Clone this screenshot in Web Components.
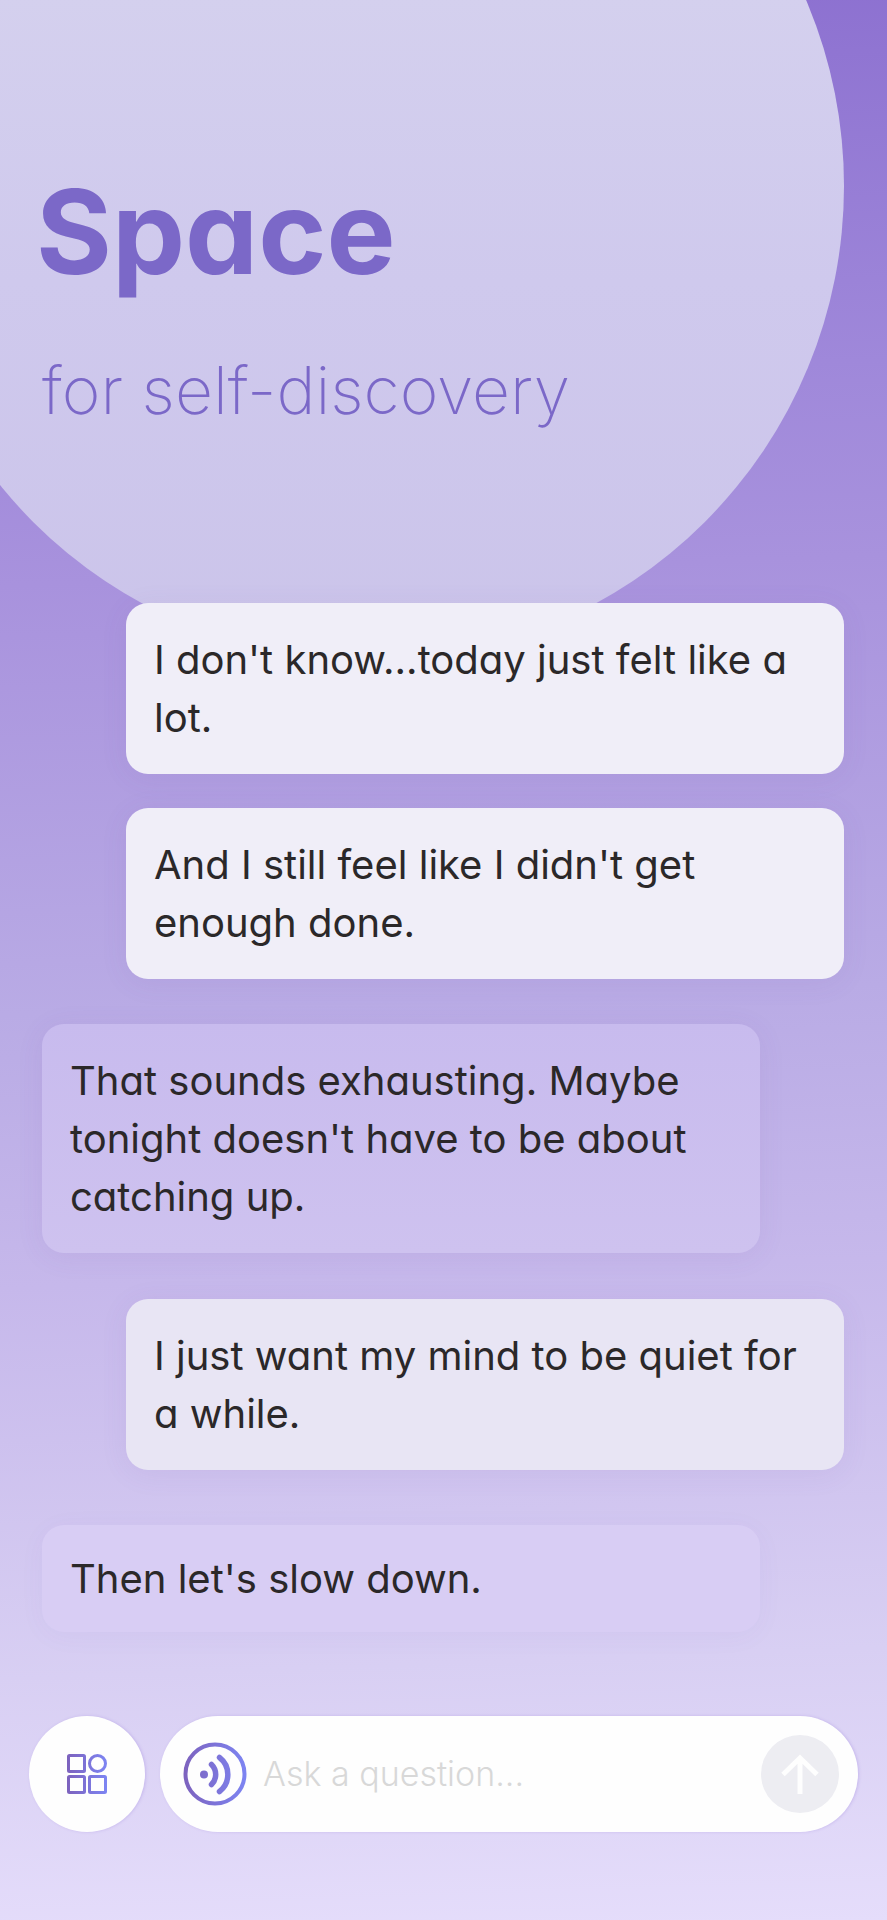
<!DOCTYPE html>
<html lang="en">
<head>
<meta charset="UTF-8">
<meta name="viewport" content="width=device-width, initial-scale=1">
<title>Space for self-discovery</title>
<style>
    body {
        margin: 0;
        font-family: Inter, "Liberation Sans", sans-serif;
        background: #8f76d3;
    }
</style>
</head>
<body>
<space-app>
    <space-hero slot="hero">
        <span slot="title">Space</span>
        <span slot="subtitle">for self-discovery</span>
    </space-hero>

    <chat-bubble from="me">I don't know...today just felt like a lot.</chat-bubble>
    <chat-bubble from="me">And I still feel like I didn't get enough done.</chat-bubble>
    <chat-bubble from="space">That sounds exhausting. Maybe tonight doesn't have to be about catching up.</chat-bubble>
    <chat-bubble from="me" tone="soft">I just want my mind to be quiet for a while.</chat-bubble>
    <chat-bubble from="space" tone="soft">Then let's slow down.</chat-bubble>

    <ask-bar slot="footer" placeholder="Ask a question..."></ask-bar>
</space-app>

<script>
class SpaceApp extends HTMLElement {
    constructor() {
        super();
        this.attachShadow({mode: "open"});

        this.shadowRoot.innerHTML = `
            <slot name="hero"></slot>
            <main class="chat"><slot></slot></main>
            <slot name="footer"></slot>

            <style>
                :host {
                    display: flex;
                    flex-direction: column;
                    min-height: 100vh;
                    overflow: hidden;
                    background: linear-gradient(178deg, #8c70d0 0%, #9f88da 20%, #a892dd 30%, #b9abe5 52%, #c6b8eb 66%, #d8cff3 86%, #e5ddfb 100%);
                }

                .chat {
                    flex: 1;
                    display: flex;
                    flex-direction: column;
                    padding: 0 43px 0 42px;
                    position: relative;
                }
            </style>
        `;
    }
}
customElements.define('space-app', SpaceApp);

class SpaceHero extends HTMLElement {
    constructor() {
        super();
        this.attachShadow({mode: "open"});

        this.shadowRoot.innerHTML = `
            <div class="moon"></div>
            <h1><slot name="title"></slot></h1>
            <p><slot name="subtitle"></slot></p>

            <style>
                :host {
                    display: block;
                    position: relative;
                    box-sizing: border-box;
                    min-height: 603px;
                    padding: 160px 36px 0;
                    color: #7b68c8;
                    font-feature-settings: "cv11";
                }

                /* big pale circle behind the headline */
                .moon {
                    position: absolute;
                    top: -289px;
                    right: 43px;
                    width: 950px;
                    height: 950px;
                    border-radius: 50%;
                    background: linear-gradient(#d4d0ee 30%, #cfc9ed 60%, #cbc4ea);
                }

                h1, p {
                    position: relative;
                    margin: 0;
                }

                h1 {
                    font-size: 116px;
                    line-height: 144px;
                    font-weight: 700;
                }

                p {
                    margin-top: 44px;
                    padding-left: 6px;
                    font-size: 66px;
                    line-height: 84px;
                    font-weight: 200;
                }
            </style>
        `;
    }
}
customElements.define('space-hero', SpaceHero);

class ChatBubble extends HTMLElement {
    constructor() {
        super();
        this.attachShadow({mode: "open"});

        this.shadowRoot.innerHTML = `
            <slot></slot>

            <style>
                :host {
                    display: block;
                    box-sizing: border-box;
                    width: calc(100% - 84px);
                    padding: 28px 28px 27px;
                    border-radius: 22px;
                    font-size: 40px;
                    line-height: 58px;
                    font-feature-settings: "cv11";
                    color: #2b2829;
                    box-shadow: 0 4px 28px rgba(110, 80, 170, .08);
                }

                :host([from="me"]) {
                    align-self: flex-end;
                    margin-bottom: 34px;
                    background: #f0eef8;
                }

                :host([from="space"]) {
                    margin: 11px 0 46px;
                    background: linear-gradient(#c8bbee, #cec2ef);
                }

                :host([from="me"][tone="soft"]) {
                    margin-bottom: 44px;
                    background: #e8e5f4;
                }

                :host([from="space"][tone="soft"]) {
                    padding-top: 25px;
                    padding-bottom: 24px;
                    background: #d8cdf4;
                    box-shadow: 0 4px 28px rgba(110, 80, 170, .04);
                }
            </style>
        `;
    }
}
customElements.define('chat-bubble', ChatBubble);

class AskBar extends HTMLElement {
    constructor() {
        super();
        this.attachShadow({mode: "open"});

        this.shadowRoot.innerHTML = `
            <button class="apps" type="button" aria-label="Apps">
                <svg width="40" height="40" viewBox="0 0 40 40" fill="none" stroke="url(#g)" stroke-width="3">
                    <defs>
                        <linearGradient id="g" gradientUnits="userSpaceOnUse" x1="0" y1="0" x2="40" y2="0">
                            <stop stop-color="#7d62bd"/><stop offset="1" stop-color="#7d85f3"/>
                        </linearGradient>
                    </defs>
                    <rect x="1.5" y="1.5" width="16" height="16" rx="1"/>
                    <circle cx="30.5" cy="9.5" r="8"/>
                    <rect x="1.5" y="22.5" width="16" height="16" rx="1"/>
                    <rect x="22.5" y="22.5" width="16" height="16" rx="1"/>
                </svg>
            </button>
            <form class="field">
                <button class="voice" type="button" aria-label="Voice">
                    <svg width="64" height="64" viewBox="0 0 64 64" fill="none" stroke="url(#v)" stroke-width="5.5" stroke-linecap="round">
                        <defs>
                            <linearGradient id="v" gradientUnits="userSpaceOnUse" x1="0" y1="0" x2="64" y2="0">
                                <stop stop-color="#7d62bd"/><stop offset="1" stop-color="#7d85f3"/>
                            </linearGradient>
                        </defs>
                        <circle cx="32" cy="32" r="29.5" stroke-width="4"/>
                        <circle cx="21" cy="32.5" r="4" fill="url(#v)" stroke="none"/>
                        <path d="M28.5 22.5A14 14 0 0 1 28.5 42.5"/>
                        <path d="M36.5 15.5A21.5 21.5 0 0 1 36.5 49.5"/>
                    </svg>
                </button>
                <input type="text" aria-label="Question">
                <button class="send" type="submit" aria-label="Send">
                    <svg width="78" height="78" viewBox="0 0 78 78" fill="none" stroke="#fefefe" stroke-width="5">
                        <path d="M39 59V23M22 39.5L39 23l17 16.5"/>
                    </svg>
                </button>
            </form>

            <style>
                :host {
                    display: flex;
                    gap: 15px;
                    padding: 38px 29px 89px;
                }

                button {
                    display: grid;
                    place-items: center;
                    flex: none;
                    padding: 0;
                    border: 0;
                    border-radius: 50%;
                    background: none;
                }

                .apps, .field {
                    height: 116px;
                    background: #fefefe;
                    box-shadow: 1px 0 3px rgba(130, 100, 210, .25);
                }

                .apps {
                    width: 116px;
                }

                .field {
                    flex: 1;
                    min-width: 0;
                    display: flex;
                    align-items: center;
                    box-sizing: border-box;
                    padding: 0 19px 0 23px;
                    border-radius: 58px;
                }

                input {
                    flex: 1;
                    min-width: 0;
                    margin: 0 16px;
                    padding: 0;
                    border: 0;
                    outline: 0;
                    background: none;
                    font: 300 34px Inter, sans-serif;
                    line-height: 48px;
                    color: #2b2829;
                }

                input::placeholder {
                    color: #d8d8d8;
                    opacity: 1;
                }

                .send {
                    width: 78px;
                    height: 78px;
                    background: #ededf2;
                }
            </style>
        `;
    }

    connectedCallback() {
        this.shadowRoot.querySelector('input').placeholder = this.getAttribute('placeholder') || '';
        this.shadowRoot.querySelector('form').addEventListener('submit', (e) => e.preventDefault());
    }
}
customElements.define('ask-bar', AskBar);
</script>
</body>
</html>
